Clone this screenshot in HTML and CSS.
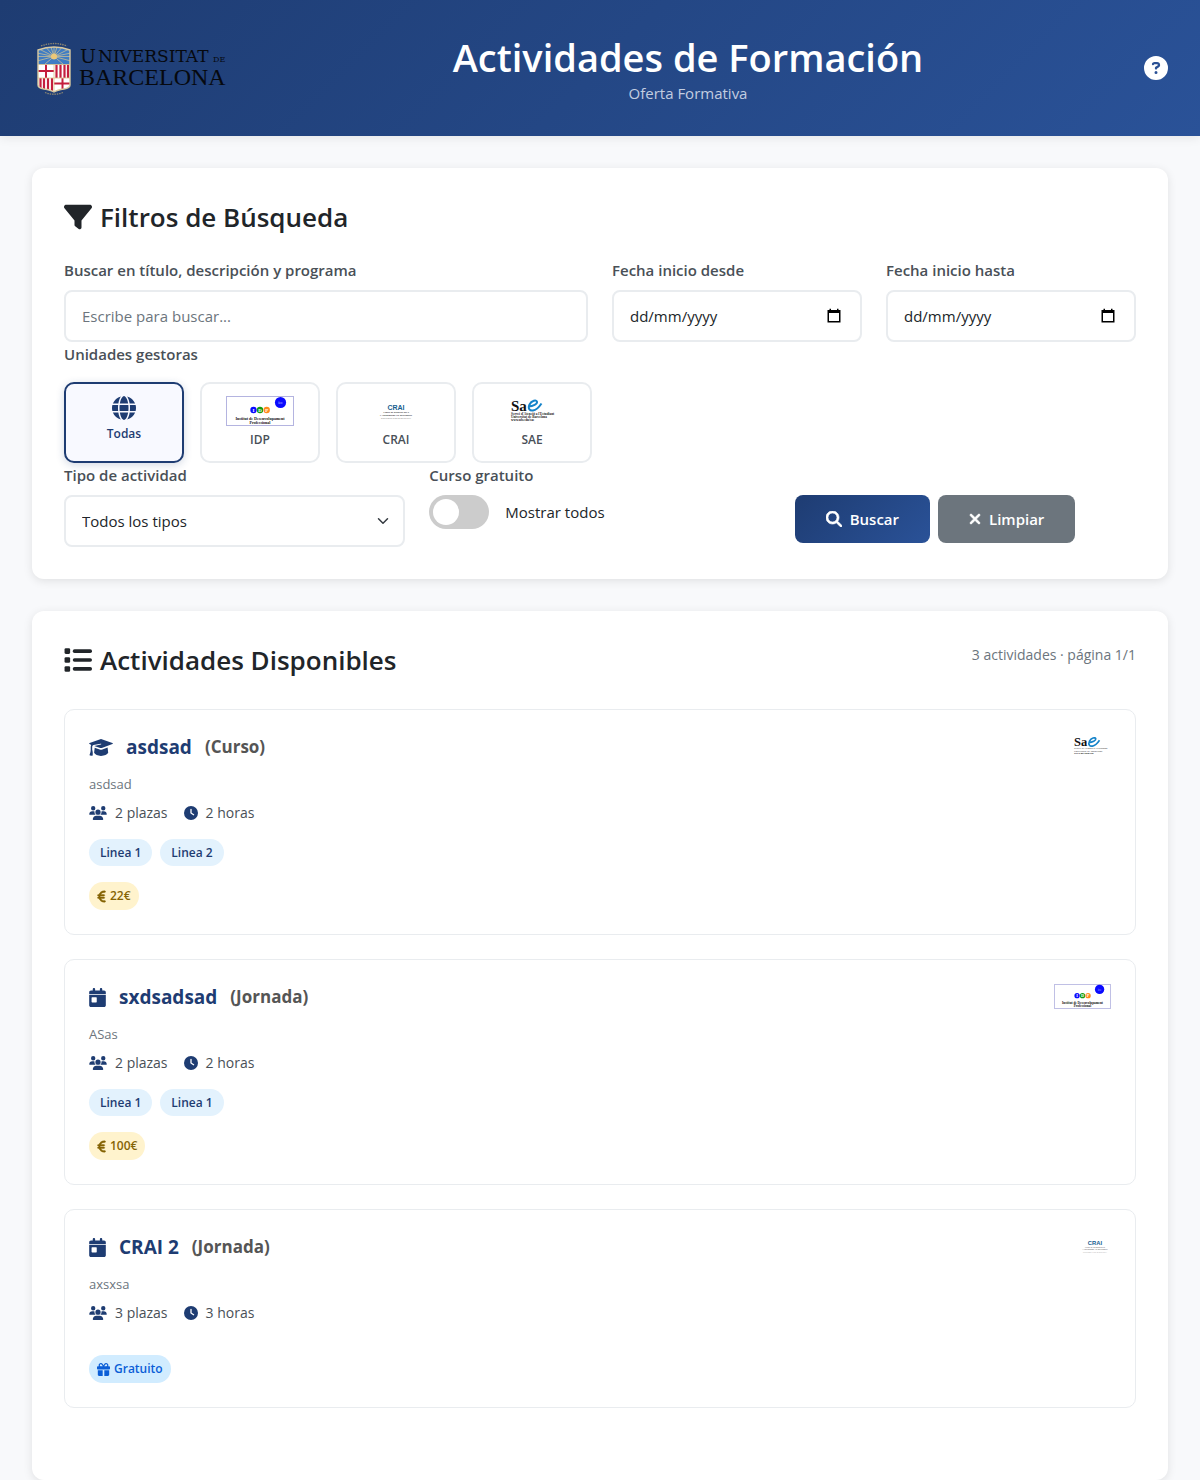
FILE: index.html
```html
<!DOCTYPE html>
<html lang="es">
<head>
<meta charset="utf-8">
<meta name="viewport" content="width=device-width, initial-scale=1">
<title>Actividades de Formación</title>
<link rel="stylesheet" href="styles.css">
</head>
<body>
<svg class="sprite" aria-hidden="true">
  <symbol id="i-filter" viewBox="0 0 512 512"><path d="M3.9 54.9C10.5 40.9 24.5 32 40 32H472c15.5 0 29.5 8.9 36.1 22.9s4.6 30.5-5.2 42.5L320 320.9V448c0 12.1-6.8 23.2-17.7 28.6s-23.8 4.3-33.5-3l-64-48c-8.1-6-12.8-15.5-12.8-25.6V320.9L9 97.3C-.7 85.4-2.8 68.8 3.9 54.9z"/></symbol>
  <symbol id="i-search" viewBox="0 0 512 512"><path stroke="currentColor" stroke-width="22" d="M416 208c0 45.900-14.900 88.300-40 122.700L502.600 457.400c12.500 12.500 12.500 32.800 0 45.300s-32.800 12.500-45.300 0L330.700 376c-34.400 25.200-76.800 40-122.700 40C93.100 416 0 322.900 0 208S93.100 0 208 0S416 93.100 416 208zM208 352a144 144 0 1 0 0-288 144 144 0 1 0 0 288z"/></symbol>
  <symbol id="i-xmark" viewBox="0 0 384 512"><path stroke="currentColor" stroke-width="22" d="M342.6 150.6c12.500-12.500 12.500-32.800 0-45.300s-32.800-12.500-45.300 0L192 210.700 86.600 105.400c-12.500-12.500-32.800-12.500-45.300 0s-12.500 32.800 0 45.300L146.700 256 41.400 361.400c-12.500 12.500-12.500 32.800 0 45.300s32.800 12.500 45.300 0L192 301.300 297.400 406.600c12.500 12.500 32.800 12.500 45.300 0s12.500-32.800 0-45.300L237.300 256 342.600 150.600z"/></symbol>
  <symbol id="i-clock" viewBox="0 0 512 512"><path d="M256 0a256 256 0 1 1 0 512A256 256 0 1 1 256 0zM232 120V256c0 8 4 15.500 10.700 20l96 64c11 7.400 25.900 4.400 33.300-6.700s4.400-25.900-6.700-33.300L280 243.200V120c0-13.300-10.700-24-24-24s-24 10.700-24 24z"/></symbol>
  <symbol id="i-question" viewBox="0 0 512 512"><path d="M256 512A256 256 0 1 0 256 0a256 256 0 1 0 0 512zM169.800 165.300c7.900-22.300 29.100-37.300 52.800-37.300h58.300c34.900 0 63.100 28.300 63.100 63.100c0 22.600-12.100 43.500-31.700 54.800L280 264.400c-.2 13-10.900 23.600-24 23.600c-13.300 0-24-10.700-24-24V250.500c0-8.600 4.600-16.500 12.100-20.800l44.300-25.400c4.700-2.700 7.600-7.700 7.600-13.100c0-8.400-6.800-15.100-15.100-15.100H222.600c-3.400 0-6.400 2.100-7.500 5.300l-.4 1.200c-4.400 12.500-18.200 19-30.600 14.600s-19-18.200-14.600-30.600l.4-1.200zM224 352a32 32 0 1 1 64 0 32 32 0 1 1 -64 0z"/></symbol>
  <symbol id="i-globe" viewBox="0 0 512 512"><path d="M352 256c0 22.200-1.200 43.600-3.300 64H163.300c-2.200-20.400-3.300-41.800-3.300-64s1.200-43.600 3.300-64H348.700c2.200 20.400 3.300 41.800 3.300 64zm28.800-64H503.900c5.300 20.500 8.100 41.900 8.100 64s-2.800 43.500-8.100 64H380.800c2.100-20.600 3.200-42 3.200-64s-1.100-43.400-3.200-64zm112.600-32H376.700c-10-63.900-29.800-117.400-55.300-151.600c78.300 20.700 142 77.500 171.900 151.600zm-149.100 0H167.700c6.100-36.400 15.500-68.600 27-94.700c10.500-23.600 22.200-40.700 33.500-51.500C239.400 3.200 248.700 0 256 0s16.600 3.200 27.800 13.800c11.300 10.800 23 27.900 33.500 51.500c11.600 26 20.900 58.200 27 94.700zm-209 0H18.600C48.600 85.900 112.200 29.100 190.600 8.400C165.100 42.600 145.300 96.100 135.300 160zM8.100 192H131.200c-2.100 20.600-3.200 42-3.200 64s1.100 43.400 3.200 64H8.100C2.800 299.500 0 278.100 0 256s2.800-43.500 8.100-64zM194.700 446.600c-11.600-26-20.900-58.200-27-94.600H344.300c-6.100 36.400-15.500 68.600-27 94.600c-10.500 23.600-22.200 40.700-33.500 51.500C272.600 508.800 263.300 512 256 512s-16.600-3.200-27.800-13.800c-11.300-10.800-23-27.900-33.500-51.500zM135.300 352c10 63.900 29.800 117.400 55.300 151.600C112.200 482.900 48.600 426.100 18.600 352H135.300zm358.100 0c-30 74.100-93.600 130.900-171.900 151.600c25.500-34.200 45.200-87.700 55.300-151.600H493.400z"/></symbol>
  <symbol id="i-list" viewBox="0 0 512 512"><rect x="10" y="42" width="102" height="102" rx="24"/><rect x="10" y="205" width="102" height="102" rx="24"/><rect x="10" y="368" width="102" height="102" rx="24"/><rect x="160" y="61" width="352" height="66" rx="32"/><rect x="160" y="223" width="352" height="66" rx="32"/><rect x="160" y="385" width="352" height="66" rx="32"/></symbol>
  <symbol id="i-users" viewBox="0 0 640 512"><path d="M144 0a80 80 0 1 1 0 160A80 80 0 1 1 144 0zM512 0a80 80 0 1 1 0 160A80 80 0 1 1 512 0zM0 298.700C0 239.800 47.800 192 106.700 192h42.700c15.900 0 31 3.500 44.600 9.700c-1.300 7.200-1.900 14.700-1.900 22.300c0 38.200 16.800 72.500 43.300 96c-.2 0-.4 0-.7 0H21.300C9.600 320 0 310.400 0 298.700zM405.300 320c-.2 0-.4 0-.7 0c26.600-23.500 43.300-57.800 43.300-96c0-7.600-.7-15-1.900-22.300c13.600-6.300 28.700-9.700 44.600-9.700h42.700C592.200 192 640 239.800 640 298.700c0 11.800-9.600 21.300-21.300 21.300H405.300zM224 224a96 96 0 1 1 192 0 96 96 0 1 1 -192 0zM128 485.300C128 411.700 187.700 352 261.300 352H378.700C452.300 352 512 411.700 512 485.300c0 14.700-11.900 26.700-26.700 26.700H154.700c-14.700 0-26.700-11.900-26.700-26.700z"/></symbol>
  <symbol id="i-cap" viewBox="0 0 24 19"><path d="M12 1L23.400 5Q24.400 5.500 23.400 6.100L12.800 10Q12 10.200 11.200 10L5.200 7.900L11.800 6.600Q12.500 6.300 12.200 5.800Q12 5.600 11.500 5.700L4.500 7.100Q3.600 7.400 3.200 8.500V11.500Q4 14.500 3.700 17.200Q3.500 17.800 2.800 17.800L1 17.500Q.3 17.200 .7 16.600Q1.700 14.200 1.700 12V9Q1.700 7.900 2.200 7L.6 6.100Q-.4 5.500 .6 5Z"/><path d="M5.700 9.700L10.600 11.500Q12 11.900 13.400 11.500L18.600 9.600L19.200 14.800Q17.500 17.800 12 17.900Q6.800 17.800 5.100 14.800Z"/></symbol>
  <symbol id="i-day" viewBox="0 0 448 512"><path d="M128 0c17.700 0 32 14.300 32 32V64H288V32c0-17.700 14.300-32 32-32s32 14.300 32 32V64h48c26.500 0 48 21.500 48 48v48H0V112C0 85.500 21.500 64 48 64H96V32c0-17.700 14.300-32 32-32zM0 185H448V464c0 26.500-21.500 48-48 48H48c-26.500 0-48-21.500-48-48V185zm80 64c-8.800 0-16 7.200-16 16v108c0 8.800 7.200 16 16 16h108c8.800 0 16-7.200 16-16V265c0-8.800-7.200-16-16-16H80z"/></symbol>
  <symbol id="i-euro" viewBox="0 0 320 512"><path stroke="currentColor" stroke-width="16" d="M48.100 240c-.1 2.700-.1 5.300-.1 8v16c0 2.700 0 5.300 .1 8H32c-17.700 0-32 14.300-32 32s14.300 32 32 32H60.300C89.900 419.900 170 480 264 480h24c17.700 0 32-14.300 32-32s-14.300-32-32-32H264c-57.900 0-108.200-32.400-133.900-80H256c17.700 0 32-14.300 32-32s-14.300-32-32-32H112.200c-.1-2.600-.2-5.300-.2-8V248c0-2.700 .1-5.400 .2-8H256c17.700 0 32-14.300 32-32s-14.300-32-32-32H130.100c25.700-47.600 76-80 133.900-80h24c17.700 0 32-14.300 32-32s-14.300-32-32-32H264C170 32 89.900 92.100 60.300 176H32c-17.700 0-32 14.300-32 32s14.300 32 32 32H48.100z"/></symbol>
  <symbol id="i-gift" viewBox="0 0 512 512"><path d="M190.500 68.800L225.300 128H224 152c-22.100 0-40-17.900-40-40s17.900-40 40-40h2.200c14.900 0 28.800 7.900 36.300 20.800zM64 88c0 14.400 3.500 28 9.600 40H32c-17.700 0-32 14.300-32 32v64c0 17.700 14.300 32 32 32H480c17.700 0 32-14.300 32-32V160c0-17.700-14.300-32-32-32H438.400c6.100-12 9.600-25.600 9.600-40c0-48.600-39.400-88-88-88h-2.200c-31.900 0-61.500 16.900-77.700 44.400L256 85.500l-24.100-41C215.700 16.900 186.100 0 154.200 0H152C103.400 0 64 39.400 64 88zm336 0c0 22.100-17.900 40-40 40H288h-1.300l34.800-59.200C329.100 55.900 342.900 48 357.800 48H360c22.100 0 40 17.900 40 40zM32 288V464c0 26.500 21.500 48 48 48H224V288H32zM288 512H432c26.500 0 48-21.500 48-48V288H288V512z"/></symbol>
  <symbol id="i-calendar" viewBox="0 0 16 16"><path d="M1.500 2h2V0.800h1.500V2h6V0.800h1.500V2h2v12.500H1.500zM3 5v8h10V5z" fill-rule="evenodd"/></symbol>
  <symbol id="l-idp" viewBox="0 0 68 30">
    <rect x=".5" y=".5" width="67" height="29" fill="#fff" stroke="#b4b4e0"/>
    <circle cx="54.500" cy="6.500" r="5.600" fill="#0a0aff"/><text x="54.500" y="8" class="logo-serif" font-size="4" fill="#9b9bff" text-anchor="middle">ice</text>
    <circle cx="27.500" cy="14" r="3.200" fill="#0a0aff"/><circle cx="34" cy="14" r="3.200" fill="#129a12"/><circle cx="40.700" cy="14" r="3.200" fill="#ff8a1c"/>
    <g class="logo-serif" font-weight="700" text-anchor="middle"><g font-size="5" fill="#fff"><text x="27.500" y="15.700">I</text><text x="34" y="15.700">D</text><text x="40.700" y="15.700">P</text></g>
    <g font-size="4" fill="#111"><text x="34" y="23.500">Institut de Desenvolupament</text><text x="34" y="28">Professional</text></g></g>
  </symbol>
  <symbol id="l-crai" viewBox="0 0 38 30">
    <text x="19" y="13.500" class="logo-sans" font-weight="700" font-size="7" fill="#17608f" text-anchor="middle">CRAI</text>
    <g class="logo-serif" font-size="2.400" text-anchor="middle" fill="#333"><text x="19" y="17">Centre de Recursos per a</text><text x="19" y="19.500">l'Aprenentatge i la Investigació</text><text x="19" y="22.500" font-size="2" fill="#888">UNIVERSITAT DE BARCELONA</text></g>
  </symbol>
  <symbol id="l-sae" viewBox="0 0 45 30">
    <text x="1" y="14.500" class="logo-serif" font-weight="700" font-size="15" fill="#111">Sa</text>
    <path d="M18.500 10.500C23 10 27.500 8 27 5.700C26.500 3.500 21.500 4.500 19.500 8.500C17.500 13 20 15 23 14.500C26.500 14 29.500 10.500 31.500 7.500" fill="none" stroke="#1583c9" stroke-width="2"/>
    <g class="logo-serif" font-size="3.400" fill="#222"><text x="1" y="18.500">Servei d'Atenció a l'Estudiant</text><text x="1" y="21.500">Universitat de Barcelona</text><text x="1" y="24.500" font-weight="700">www.ub.edu/sae</text></g>
  </symbol>
</svg>

<header class="site-header">
  <svg class="brand" viewBox="0 0 200 72" role="img" aria-label="Universitat de Barcelona">
    <defs>
      <clipPath id="shield"><path d="M6 18Q22 12 38 18V53Q38 56 32 57Q25 58 22 60Q19 58 12 57Q6 56 6 53Z"/></clipPath>
    </defs>
    <g clip-path="url(#shield)">
      <rect x="5" y="12" width="34" height="50" fill="#fff"/>
      <rect x="5" y="12" width="34" height="20.500" fill="#3f7cc4"/>
      <path d="M22 24.500L5 16M22 24.500L12 13M22 24.500L18 12M22 24.500V12M22 24.500L26 12M22 24.500L32 13M22 24.500L39 16M22 24.500L5 21M22 24.500L39 21M22 24.500H5M22 24.500H39M22 24.500L5 29M22 24.500L39 29M22 24.500L13 32M22 24.500L31 32" stroke="#d8c690" stroke-width=".7"/>
      <circle cx="22" cy="24.500" r="3" fill="#ecc878"/>
      <path d="M14 32.500V46M5 39H22M30.500 46V60M22 51.500H39" stroke="#c41e3d" stroke-width="2"/>
      <path d="M24.500 32.500V46M28.500 32.500V46M32.500 32.500V46M36 32.500V46M8.500 46V60M12 46V60M16 46V60M20 46V60" stroke="#c41e3d" stroke-width="2.200"/>
      <path d="M22 32.500V60M5 46H39M5 32.500H39" stroke="#d9c48e" stroke-width=".8"/>
    </g>
    <path d="M6 18Q22 12 38 18V53Q38 56 32 57Q25 58 22 60Q19 58 12 57Q6 56 6 53Z" fill="none" stroke="#d9c9a0" stroke-width="1.400"/>
    <path d="M9 14Q22 9 35 14M13 60.500Q22 64 31 60.500" fill="none" stroke="#8d8672" stroke-width="1.300" stroke-dasharray="1.500 .9"/>
    <g fill="#06090f">
      <text x="48" y="31" class="logo-wide" font-size="19">U</text>
      <text x="66" y="30" class="logo-wide" font-size="17">NIVERSITAT</text>
      <text x="181" y="30" class="logo-wide" font-size="8">DE</text>
      <text x="47" y="53" class="logo-serif" font-size="24">BARCELONA</text>
    </g>
  </svg>
  <div class="site-title">
    <h1>Actividades de Formación</h1>
    <p>Oferta Formativa</p>
  </div>
  <button class="help" type="button" aria-label="Ayuda"><svg class="icon icon-24"><use href="#i-question"/></svg></button>
</header>

<main class="page">
  <section class="panel">
    <h2><svg class="icon icon-28"><use href="#i-filter"/></svg>Filtros de Búsqueda</h2>
    <form class="filters">
      <div class="field span-6">
        <label for="q">Buscar en título, descripción y programa</label>
        <input id="q" class="control" type="text" placeholder="Escribe para buscar...">
      </div>
      <div class="field span-3">
        <label for="from">Fecha inicio desde</label>
        <div class="control date"><input id="from" type="text" placeholder="dd/mm/yyyy"><svg class="icon icon-16"><use href="#i-calendar"/></svg></div>
      </div>
      <div class="field span-3">
        <label for="to">Fecha inicio hasta</label>
        <div class="control date"><input id="to" type="text" placeholder="dd/mm/yyyy"><svg class="icon icon-16"><use href="#i-calendar"/></svg></div>
      </div>
      <div class="field units-field span-12">
        <span class="label" id="units-label">Unidades gestoras</span>
        <div class="units" role="group" aria-labelledby="units-label">
          <button class="unit active" type="button" aria-pressed="true"><svg class="icon icon-24"><use href="#i-globe"/></svg>Todas</button>
          <button class="unit" type="button"><svg class="unit-logo idp"><use href="#l-idp"/></svg>IDP</button>
          <button class="unit" type="button"><svg class="unit-logo crai"><use href="#l-crai"/></svg>CRAI</button>
          <button class="unit" type="button"><svg class="unit-logo sae"><use href="#l-sae"/></svg>SAE</button>
        </div>
      </div>
      <div class="field span-4">
        <label for="type">Tipo de actividad</label>
        <div class="select"><select id="type" class="control"><option>Todos los tipos</option></select>
        <svg class="chevron" viewBox="0 0 16 16" aria-hidden="true"><path d="M2 5l6 6 6-6" fill="none" stroke="#343a40" stroke-width="2" stroke-linecap="round" stroke-linejoin="round"/></svg></div>
      </div>
      <div class="field span-4">
        <span class="label">Curso gratuito</span>
        <div class="switch-row"><input id="free" class="switch" type="checkbox"><label class="plain" for="free">Mostrar todos</label></div>
      </div>
      <div class="actions span-4">
        <button class="btn btn-primary" type="submit"><svg class="icon icon-16"><use href="#i-search"/></svg>Buscar</button>
        <button class="btn btn-muted" type="reset"><svg class="icon xmark"><use href="#i-xmark"/></svg>Limpiar</button>
      </div>
    </form>
  </section>

  <section class="panel results">
    <div class="results-head">
      <h2><svg class="icon icon-28"><use href="#i-list"/></svg>Actividades Disponibles</h2>
      <p class="count">3 actividades · página 1/1</p>
    </div>
    <div class="activities">
      <article class="activity">
        <div class="activity-head">
          <h3><svg class="icon cap"><use href="#i-cap"/></svg>asdsad <span class="kind">(Curso)</span></h3>
          <svg class="card-logo sae" role="img" aria-label="SAE"><use href="#l-sae"/></svg>
        </div>
        <p class="desc">asdsad</p>
        <ul class="meta"><li><svg class="icon users"><use href="#i-users"/></svg>2 plazas</li><li><svg class="icon icon-14"><use href="#i-clock"/></svg>2 horas</li></ul>
        <div class="tags"><span class="tag">Linea 1</span><span class="tag">Linea 2</span></div>
        <span class="price"><svg class="icon euro"><use href="#i-euro"/></svg>22€</span>
      </article>
      <article class="activity">
        <div class="activity-head">
          <h3><svg class="icon day"><use href="#i-day"/></svg>sxdsadsad <span class="kind">(Jornada)</span></h3>
          <svg class="card-logo idp" role="img" aria-label="IDP"><use href="#l-idp"/></svg>
        </div>
        <p class="desc">ASas</p>
        <ul class="meta"><li><svg class="icon users"><use href="#i-users"/></svg>2 plazas</li><li><svg class="icon icon-14"><use href="#i-clock"/></svg>2 horas</li></ul>
        <div class="tags"><span class="tag">Linea 1</span><span class="tag">Linea 1</span></div>
        <span class="price"><svg class="icon euro"><use href="#i-euro"/></svg>100€</span>
      </article>
      <article class="activity">
        <div class="activity-head">
          <h3><svg class="icon day"><use href="#i-day"/></svg>CRAI 2 <span class="kind">(Jornada)</span></h3>
          <svg class="card-logo crai" role="img" aria-label="CRAI"><use href="#l-crai"/></svg>
        </div>
        <p class="desc">axsxsa</p>
        <ul class="meta"><li><svg class="icon users"><use href="#i-users"/></svg>3 plazas</li><li><svg class="icon icon-14"><use href="#i-clock"/></svg>3 horas</li></ul>
        <div class="tags"></div>
        <span class="price free"><svg class="icon gift"><use href="#i-gift"/></svg>Gratuito</span>
      </article>
    </div>
  </section>
</main>
</body>
</html>
```
FILE: styles.css
```css
*, *::before { box-sizing: border-box; }

body {
  margin: 0;
  background: #f8f9fb;
  color: #212529;
  font: 15px/24px "Open Sans", "Noto Sans", sans-serif;
}

h1, h2, h3, p, ul { margin: 0; padding: 0; }
button, input, select { font: inherit; color: inherit; }
button { cursor: pointer; }

.sprite { display: none; }
.logo-serif { font-family: "Liberation Serif", serif; }
.logo-sans { font-family: "Liberation Sans", sans-serif; }
.logo-wide { font-family: "DejaVu Serif", serif; }

.icon { flex: none; fill: currentColor; }
.icon-14 { width: 14px; height: 14px; }
.icon-16 { width: 16px; height: 16px; }
.icon-24 { width: 24px; height: 24px; }
.icon-28 { width: 28px; height: 28px; }

.site-header {
  display: flex;
  align-items: center;
  justify-content: space-between;
  padding: 32px;
  background: linear-gradient(135deg, #1e3c72 0%, #2a5298 100%);
  color: #fff;
  box-shadow: 0 2px 10px rgba(0, 0, 0, .08);
}
.brand { width: 200px; height: 72px; }
.site-title { text-align: center; }
.site-title h1 { font-size: 38px; line-height: 50px; font-weight: 600; }
.site-title p { color: #c2cde0; line-height: 22px; }
.help { display: flex; padding: 0; border: 0; background: none; color: #fff; }

.page { display: flex; flex-direction: column; gap: 32px; padding: 32px 32px 0; }

.panel {
  padding: 32px;
  background: #fff;
  border-radius: 12px;
  box-shadow: 0 2px 10px rgba(0, 0, 0, .1);
}
.panel h2 {
  display: flex;
  align-items: center;
  gap: 8px;
  font-size: 26px;
  line-height: 34px;
  font-weight: 600;
}

.filters {
  display: grid;
  grid-template-columns: repeat(12, minmax(0, 1fr));
  column-gap: 24px;
  margin-top: 24px;
}
.span-3 { grid-column: span 3; }
.span-4 { grid-column: span 4; }
.span-6 { grid-column: span 6; }
.span-12 { grid-column: span 12; }

.field { display: flex; flex-direction: column; gap: 8px; }
.units-field { gap: 16px; }
.field label, .label { color: #495057; font-weight: 600; }
.field label.plain { color: #212529; font-weight: 400; }

.control {
  width: 100%;
  height: 52px;
  padding: 0 16px;
  background: #fff;
  border: 2px solid #e9ecef;
  border-radius: 8px;
}
.control::placeholder { color: #6c757d; opacity: 1; }
.date { display: flex; align-items: center; justify-content: space-between; padding-right: 18px; }
.date input { min-width: 0; flex: 1; padding: 0; border: 0; outline: 0; background: none; }
.date input::placeholder { color: #212529; opacity: 1; }
.date .icon { color: #000; }

.select { position: relative; }
.select .control { display: block; appearance: none; }
.chevron { position: absolute; top: 20px; right: 16px; width: 12px; height: 12px; pointer-events: none; }

.units { display: flex; gap: 16px; }
.unit {
  display: flex;
  flex-direction: column;
  align-items: center;
  gap: 4px;
  width: 120px;
  padding: 12px;
  background: #fff;
  border: 2px solid #e9ecef;
  border-radius: 10px;
  color: #495057;
  font-size: 12px;
  line-height: 19px;
  font-weight: 600;
}
.unit.active {
  background: #f8f9ff;
  border-color: #1e3c72;
  color: #1e3c72;
  box-shadow: 0 2px 8px rgba(30, 60, 114, .2);
}
.unit-logo { height: 30px; }
.unit-logo.idp { width: 68px; }
.unit-logo.crai { width: 38px; }
.unit-logo.sae { width: 45px; }

.switch-row { display: flex; align-items: center; gap: 16px; }
.switch {
  appearance: none;
  display: flex;
  align-items: center;
  width: 60px;
  height: 34px;
  margin: 0;
  padding: 4px;
  background: #ccc;
  border-radius: 17px;
}
.switch::before { content: ""; width: 26px; height: 26px; border-radius: 50%; background: #fff; }
.switch:checked { background: #1e3c72; justify-content: flex-end; }

.actions { display: flex; align-items: flex-start; gap: 8px; padding-top: 32px; }
.btn {
  display: flex;
  align-items: center;
  gap: 8px;
  height: 48px;
  padding: 0 31px;
  border: 0;
  border-radius: 8px;
  color: #fff;
  font-weight: 600;
}
.btn-primary { background: linear-gradient(135deg, #1e3c72 0%, #2a5298 100%); }
.btn-muted { background: #6c757d; }
.xmark { width: 12px; height: 16px; }

.results { min-height: 869px; }
.results-head { display: flex; justify-content: space-between; align-items: flex-start; }
.count { color: #6c757d; font-size: 14px; }

.activities { display: flex; flex-direction: column; gap: 24px; margin-top: 32px; }
.activity {
  display: flex;
  flex-direction: column;
  align-items: flex-start;
  padding: 24px;
  border: 1px solid #e9ecef;
  border-radius: 10px;
}
.activity-head { display: flex; justify-content: space-between; align-self: stretch; }
.activity h3 {
  display: flex;
  align-items: center;
  gap: 13px;
  color: #1e3c72;
  font-size: 19px;
  line-height: 26px;
  font-weight: 700;
}
.kind { color: #555; font-size: 17px; }
.cap { width: 24px; height: 19px; }
.day { width: 17px; height: 19px; }
.card-logo { height: 25px; }
.card-logo.idp { width: 57px; }
.card-logo.crai { width: 32px; }
.card-logo.sae { width: 38px; }

.desc { margin-top: 14px; color: #6c757d; font-size: 13px; line-height: 21px; }
.meta {
  display: flex;
  gap: 16px;
  margin-top: 8px;
  list-style: none;
  color: #495057;
  font-size: 14px;
  line-height: 20px;
}
.meta li { display: flex; align-items: center; gap: 8px; }
.meta .icon { color: #1e3c72; }
.users { width: 18px; height: 14px; }

.tags { display: flex; flex-wrap: wrap; gap: 8px; margin: 16px 0; }
.tag, .price { border-radius: 14px; font-size: 12px; font-weight: 600; }
.tag { padding: 0 11px; background: #e3f2fd; color: #1e3c72; line-height: 27px; }
.price {
  display: flex;
  align-items: center;
  gap: 4px;
  padding: 0 8px;
  background: #fff3cd;
  color: #856404;
  line-height: 28px;
}
.price.free { background: #d1ecff; color: #0b5ed7; }
.euro { width: 9px; height: 13px; }
.gift { width: 13px; height: 13px; }
```
